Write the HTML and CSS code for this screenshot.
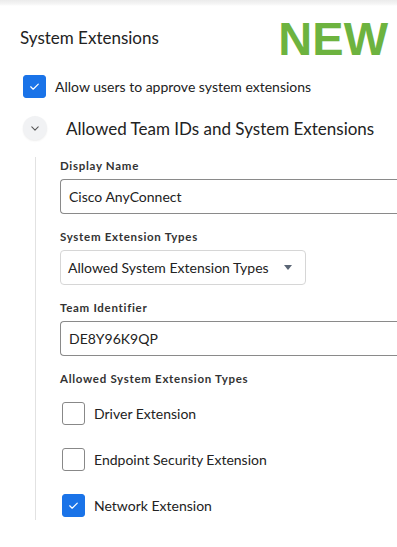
FILE: index.html
```html
<!DOCTYPE html>
<html>
<head>
<meta charset="utf-8">
<link rel="stylesheet" href="styles.css">
</head>
<body>
<div class="topbar"></div>
<div class="page">
  <div class="header">
    <h1 class="title">System Extensions</h1>
    <div class="new">NEW</div>
  </div>
  <label class="check-row main-check">
    <span class="box checked"><svg viewBox="0 0 24 24" width="13" height="13"><path d="M5 12.5l4.5 4.5L19 7.5" fill="none" stroke="#fff" stroke-width="2.2" stroke-linecap="round" stroke-linejoin="round"/></svg></span>
    <span class="check-label">Allow users to approve system extensions</span>
  </label>
  <div class="section-head">
    <span class="chev"><svg viewBox="0 0 10 6" width="8" height="5"><path d="M1 1l4 4 4-4" fill="none" stroke="#555" stroke-width="1.3" stroke-linecap="round" stroke-linejoin="round"/></svg></span>
    <span class="section-title">Allowed Team IDs and System Extensions</span>
  </div>
  <div class="section-body">
    <div class="field">
      <div class="label">Display Name</div>
      <div class="input">Cisco AnyConnect</div>
    </div>
    <div class="field">
      <div class="label">System Extension Types</div>
      <div class="select"><span>Allowed System Extension Types</span><span class="arrow"></span></div>
    </div>
    <div class="field">
      <div class="label">Team Identifier</div>
      <div class="input">DE8Y96K9QP</div>
    </div>
    <div class="field last">
      <div class="label">Allowed System Extension Types</div>
      <div class="opts">
        <label class="check-row opt"><span class="box"></span><span class="opt-label">Driver Extension</span></label>
        <label class="check-row opt"><span class="box"></span><span class="opt-label">Endpoint Security Extension</span></label>
        <label class="check-row opt"><span class="box checked"><svg viewBox="0 0 24 24" width="13" height="13"><path d="M5 12.5l4.5 4.5L19 7.5" fill="none" stroke="#fff" stroke-width="2.2" stroke-linecap="round" stroke-linejoin="round"/></svg></span><span class="opt-label">Network Extension</span></label>
      </div>
    </div>
  </div>
</div>
</body>
</html>
```
FILE: styles.css
```css
html, body {
  margin: 0;
  padding: 0;
  background: #fff;
  overflow: hidden;
}
body {
  font-family: "Lato", "Liberation Sans", sans-serif;
  color: #222;
  width: 397px;
  height: 547px;
}
.topbar {
  height: 6px;
  background: linear-gradient(#ebebeb, #f6f6f6 70%, #fff);
}
.page {
  padding: 0 0 0 20px;
}
.header {
  display: flex;
  align-items: flex-start;
  justify-content: space-between;
  height: 58px;
}
.title {
  margin: 22px 0 0 0;
  font-size: 17px;
  line-height: 20px;
  font-weight: 400;
  color: #222;
}
.new {
  font-family: "Liberation Sans", Arial, sans-serif;
  font-weight: 700;
  font-size: 47px;
  line-height: 47px;
  color: #6db33f;
  margin: 9px 9px 0 0;
}
.check-row {
  display: flex;
  align-items: center;
}
.main-check {
  margin-left: 3px;
  height: 23px;
  margin-top: 11px;
}
.box {
  width: 21px;
  height: 21px;
  border: 1px solid #888;
  border-radius: 3px;
  display: flex;
  align-items: center;
  justify-content: center;
  flex: none;
  background: #fff;
}
.box.checked {
  background: #1a73e8;
  border-color: #1a73e8;
}
.check-label {
  margin-left: 9px;
  font-size: 14px;
}
.section-head {
  display: flex;
  align-items: center;
  margin-top: 18px;
  margin-left: 3px;
  height: 24px;
}
.chev {
  width: 24px;
  height: 24px;
  border-radius: 50%;
  background: #f1f2f4;
  box-shadow: 0 1px 2px rgba(0,0,0,0.08);
  display: flex;
  align-items: center;
  justify-content: center;
}
.section-title {
  margin-left: 19px;
  font-size: 17px;
}
.section-body {
  margin: 17px 0 0 15px;
  border-left: 1px solid #e2e2e2;
  padding: 2px 0 3px 24px;
}
.field {
  margin-bottom: 16px;
}
.field.last {
  margin-bottom: 0;
}
.label {
  font-size: 11.5px;
  font-weight: 700;
  letter-spacing: 0.7px;
  color: #333;
  height: 14px;
  line-height: 14px;
  margin-bottom: 6px;
}
.input {
  height: 35px;
  box-sizing: border-box;
  border: 1px solid #8a8a8a;
  border-right: none;
  border-radius: 4px 0 0 4px;
  padding-left: 8px;
  display: flex;
  align-items: center;
  font-size: 14px;
}
.select {
  width: 246px;
  height: 35px;
  box-sizing: border-box;
  border: 1px solid #d6d6d6;
  border-radius: 4px;
  padding: 0 13px 0 7px;
  display: flex;
  align-items: center;
  justify-content: space-between;
  font-size: 14px;
}
.arrow {
  width: 0;
  height: 0;
  border-left: 4.5px solid transparent;
  border-right: 4.5px solid transparent;
  border-top: 5px solid #5a6575;
}
.opts {
  display: flex;
  flex-direction: column;
  gap: 23px;
  padding-top: 10px;
  margin-left: 2px;
}
.opt-label {
  margin-left: 9px;
  font-size: 14px;
}
```
